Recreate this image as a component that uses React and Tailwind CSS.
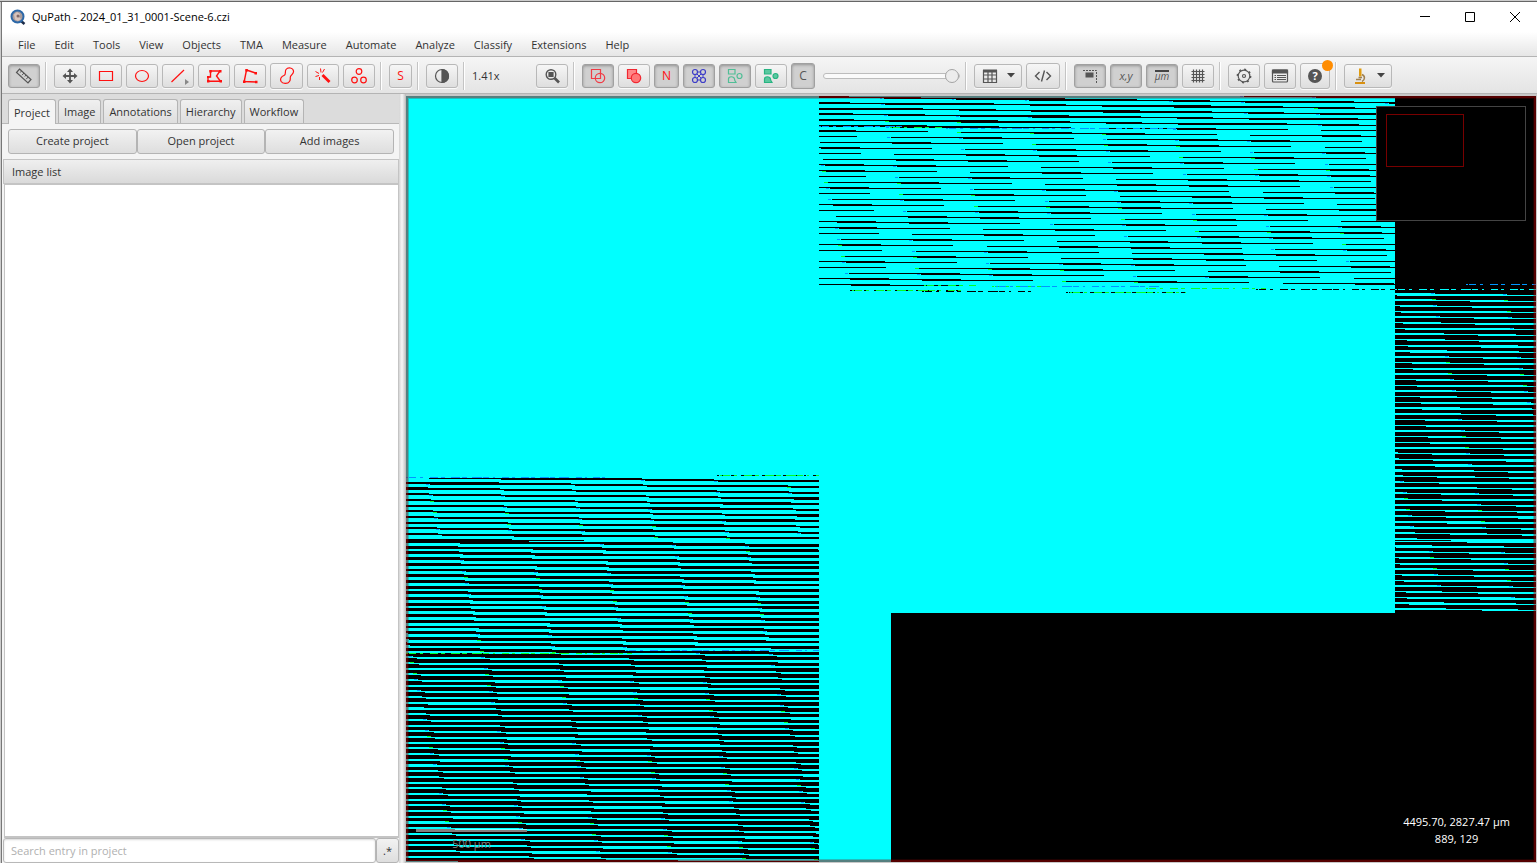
import React from 'react';

const CYAN = '#00ffff';

const menus = ['File', 'Edit', 'Tools', 'View', 'Objects', 'TMA', 'Measure', 'Automate', 'Analyze', 'Classify', 'Extensions', 'Help'];
const tabs = ['Project', 'Image', 'Annotations', 'Hierarchy', 'Workflow'];
const projectActions = ['Create project', 'Open project', 'Add images'];

// Tiles are 576 px wide, every source row is shifted by an eighth of a tile.
const TILE = 576;
const SHIFT = 72.157;
const SCALE = 1.4035;

// Each zone is a band of one tile: runs of `color` with length `run`,
// the run of source row 0 (screen row `row`) ends at x = `end`.
const zones = [
    { x0: 413, x1: 989, y0: 0, y1: 32, row: 6, end: 444, q: 0.8, run: 181, color: '#000' },
    { x0: 413, x1: 989, y0: 32, y1: 190, row: 34, end: 450, q: 0.37, run: 111, color: '#000' },
    { x0: 0, x1: 413, y0: 382, y1: 445, row: 382, end: 236, q: 0.48, run: 213, color: '#000' },
    { x0: 0, x1: 413, y0: 445, y1: 557, row: 447, end: 339, q: 0.78, run: 285, color: '#000' },
    { x0: 0, x1: 413, y0: 557, y1: 767, row: 560, end: 7, q: 0.5, run: 212, color: CYAN },
    { x0: 989, x1: 1131, y0: 195, y1: 445, row: 203, end: 1030, q: 0.52, run: 182, color: CYAN },
    { x0: 989, x1: 1131, y0: 445, y1: 515, row: 455, end: 1027, q: 0.52, run: 180, color: CYAN },
];

function zoneRuns(zone) {
    const runs = [];
    const marks = [];
    for (let y = zone.y0; y < zone.y1; y++) {
        const src = Math.floor((y - zone.row) * SCALE + zone.q);
        let end = Math.round(zone.end + src * SHIFT) % TILE;
        while (end > 0) end -= TILE;
        for (; end - zone.run < zone.x1; end += TILE) {
            const a = Math.max(zone.x0, end - zone.run);
            const b = Math.min(zone.x1, end);
            if (b > a) {
                runs.push(`M${a} ${y}h${b - a}v1h${a - b}z`);
            }
            const edge = zone.color === CYAN ? end : end - zone.run;
            const hash = (y * 7 + src * 13) % 5;
            if (hash < 3 && edge - 4 > zone.x0 && edge < zone.x1) {
                marks.push({ x: edge - 4, y, w: 3 + (hash % 2), green: hash === 1 });
            }
        }
    }
    return { d: runs.join(''), marks };
}

// Broken rows along the tile seams
const seams = [
    { x0: 413, x1: 500, y: 30, c: '#0096ff' },
    { x0: 484, x1: 536, y: 31, c: '#00ff28' },
    { x0: 540, x1: 770, y: 32, c: '#0096ff' },
    { x0: 444, x1: 555, y: 194, c: '#000' },
    { x0: 446, x1: 558, y: 194, c: '#00ff28' },
    { x0: 518, x1: 570, y: 189, c: '#00ff28' },
    { x0: 516, x1: 630, y: 195, c: '#000' },
    { x0: 586, x1: 640, y: 190, c: '#00ff28' },
    { x0: 590, x1: 760, y: 190, c: '#0096ff' },
    { x0: 660, x1: 780, y: 196, c: '#000' },
    { x0: 664, x1: 780, y: 196, c: '#00ff28' },
    { x0: 740, x1: 860, y: 192, c: '#00ff28' },
    { x0: 850, x1: 989, y: 193, c: '#000' },
    { x0: 0, x1: 200, y: 381, c: '#0096ff' },
    { x0: 311, x1: 413, y: 379, c: '#000' },
    { x0: 314, x1: 413, y: 379, c: '#00ff28' },
    { x0: 0, x1: 226, y: 557, c: '#00ff28' },
    { x0: 220, x1: 413, y: 554, c: '#0096ff' },
    { x0: 1060, x1: 1131, y: 188, c: '#0096ff' },
    { x0: 989, x1: 1131, y: 193, c: CYAN },
];

function seamPath({ x0, x1, y }) {
    let d = '';
    let i = 0;
    for (let x = x0; x < x1; i++) {
        const w = Math.min(2 + ((i * 5) % 9), x1 - x);
        d += `M${x} ${y}h${w}v1h-${w}z`;
        x += w + 1 + ((i * 3) % 7);
    }
    return d;
}

function SlideImage() {
    return (
        <svg width="1131" height="767" shapeRendering="crispEdges" className="block" role="img" aria-label="Slide image">
            <rect width="1131" height="767" fill={CYAN} />
            <rect x="485" y="517" width="646" height="250" fill="#000" />
            <rect x="989" width="142" height="517" fill="#000" />
            <rect y="557" width="413" height="210" fill="#000" />
            {zones.map((zone, i) => {
                const { d, marks } = zoneRuns(zone);
                return (
                    <g key={i}>
                        <path d={d} fill={zone.color} />
                        {marks.map((m, k) => (
                            <rect key={k} x={m.x} y={m.y} width={m.w} height="1" fill={m.green ? '#00ff28' : '#0096ff'} />
                        ))}
                    </g>
                );
            })}
            {seams.map((s, i) => <path key={i} d={seamPath(s)} fill={s.c} />)}
        </svg>
    );
}

function Icon({ children, color = '#555555', w = 18 }) {
    return (
        <svg width={w} height="18" viewBox={`0 0 ${w} 18`} fill="none" stroke={color} strokeWidth="1.2" aria-hidden="true">
            {children}
        </svg>
    );
}

function ToolButton({ label, active, size = 'w-8 h-6', className = '', children }) {
    const look = active
        ? 'bg-[#d0d0d0] border-[#a0a0a0] shadow-[inset_0_1px_3px_rgba(0,0,0,0.3)]'
        : 'bg-linear-to-b from-[#f6f6f6] to-[#dedede] border-[#b8b8b8] shadow-[0_1px_0_#fafafa]';
    return (
        <button
            type="button"
            aria-label={label}
            aria-pressed={!!active}
            className={`relative shrink-0 flex items-center justify-center rounded-[3px] border ${look} ${size} ${className}`}
        >
            {children}
        </button>
    );
}

function Separator() {
    return <div className="shrink-0 w-1.5 h-7 pl-px"><div className="h-full w-0.5 border-l border-[#c4c4c4] bg-white" /></div>;
}

function Caret() {
    return <svg width="8" height="5" viewBox="0 0 8 5" aria-hidden="true"><path d="M0 0h8L4 4.5z" fill="#444" /></svg>;
}

function DrawingTools() {
    const red = '#ff1010';
    return (
        <>
            <ToolButton label="Move">
                <Icon>
                    <path d="M9 3v12M3 9h12" strokeWidth="1.8" />
                    <path d="M9 1.5 12 5H6zM9 16.500 6 13h6zM1.500 9 5 6v6zM16.500 9 13 12V6z" fill="#555" stroke="none" />
                </Icon>
            </ToolButton>
            <ToolButton label="Rectangle"><Icon color={red}><path d="M2.500 4.500h13v9h-13z" /></Icon></ToolButton>
            <ToolButton label="Ellipse"><Icon color={red}><ellipse cx="9" cy="9" rx="6.500" ry="5.500" /></Icon></ToolButton>
            <ToolButton label="Line">
                <Icon color={red}><path d="M2.500 15 15 3" /></Icon>
                <svg className="absolute right-1 bottom-0.5" width="4" height="6" viewBox="0 0 4 6" aria-hidden="true"><path d="M0 0 4 3 0 6z" fill="#888" /></svg>
            </ToolButton>
            <ToolButton label="Polygon">
                <Icon color={red}>
                    <path d="M5.500 4H15l-3.500 5 4 5.200H3V10h2.500z" strokeWidth="1.400" />
                    <path d="M4.300 3h2.500v2.500H4.300zM14 3h2.500v2.500H14zM14.500 13H17v2.500h-2.500zM2 13h2.500v2.500H2zM2 9h2.500v2H2z" fill={red} stroke="none" />
                </Icon>
            </ToolButton>
            <ToolButton label="Polyline">
                <Icon color={red}>
                    <path d="M14.500 6 5.500 3 3.200 14.500 15 15" strokeWidth="1.400" />
                    <path d="M13.500 5H16v2.500h-2.500zM4.300 2h2.500v2.500H4.300zM2 13.500h2.500V16H2zM14 13.700h2.500v2.500H14z" fill={red} stroke="none" />
                </Icon>
            </ToolButton>
            <ToolButton label="Brush" size="w-[33px] h-[26px]">
                <Icon color={red}>
                    <path d="M8 2.500c2-2.500 7-2 7.500 1.500.400 2.500-2 3.500-3 5.500-.700 1.500.500 3-1 5-1.800 2.800-7 2.500-8.500-.300-1.200-2.700.500-4.700 3-5.700C8.500 7.500 6.500 5 8 2.500z" />
                </Icon>
            </ToolButton>
            <ToolButton label="Wand">
                <Icon color={red}>
                    <path d="M8.500 8 15.500 15" strokeWidth="2.800" />
                    <path d="M6.500 1.500l.5 4M10.500 2l-2 3.500M1.500 4.500 5 6.500M1.500 9.500 5 8.500M5.500 10v3" strokeWidth="1" />
                </Icon>
            </ToolButton>
            <ToolButton label="Points">
                <Icon color={red}><circle cx="9" cy="4.500" r="2.800" /><circle cx="4.500" cy="13" r="2.800" /><circle cx="13.500" cy="13" r="2.800" /></Icon>
            </ToolButton>
        </>
    );
}

function OverlayTools() {
    return (
        <>
            <ToolButton label="Show annotations" active>
                <Icon color="#f03c46"><path d="M2.500 2.500h9v9h-9z" /><circle cx="11" cy="11" r="4.700" /></Icon>
            </ToolButton>
            <ToolButton label="Fill annotations">
                <Icon color="#f02832"><path d="M2.500 2.500h9v9h-9z" fill="#f88" /><circle cx="11" cy="11" r="4.700" fill="#f77" /></Icon>
            </ToolButton>
            <ToolButton label="Show names" active size="w-[25px] h-6"><span className="text-[12px] text-[#ff1010]">N</span></ToolButton>
            <ToolButton label="Show TMA grid" active>
                <Icon color="#3c3cc8">
                    <circle cx="5" cy="5" r="2.500" /><circle cx="13" cy="5" r="2.500" /><circle cx="5" cy="13" r="2.500" /><circle cx="13" cy="13" r="2.500" />
                    <path d="M7 7l4 4M11 7l-4 4M7.500 5h3M7.500 13h3M5 7.500v3M13 7.500v3" strokeWidth="1" />
                </Icon>
            </ToolButton>
            <ToolButton label="Show detections" active>
                <Icon color="#50be96"><path d="M2.500 2.500h6.500v4.500H2.500zM2.500 15.500V12c0-3 5.500-3 6 0 0 1.500.500 2 1.500 3.500z" /><circle cx="13.500" cy="9" r="2.500" /></Icon>
            </ToolButton>
            <ToolButton label="Fill detections">
                <Icon color="#28b482"><path d="M2.500 2.500h6.500v4.500H2.500zM2.500 15.500V12c0-3 5.500-3 6 0 0 1.500.500 2 1.500 3.500z" fill="#5ac8a0" /><circle cx="13.500" cy="9" r="2.500" fill="#5ac8a0" /></Icon>
            </ToolButton>
            <ToolButton label="Show pixel classification" active size="w-6 h-[26px]"><span className="text-[12px] text-[#555]">C</span></ToolButton>
        </>
    );
}

function Toolbar() {
    return (
        <div role="toolbar" aria-label="Main toolbar" className="h-[37px] flex items-center gap-1 pt-0.5 pl-1.5 bg-linear-to-b from-[#f5f5f5] to-[#e4e4e4] border-b border-[#b4b4b4]">
            <ToolButton label="Show analysis pane" active>
                <Icon>
                    <path d="M4.500 2 16 12.500 13 16 1.500 5.500z" />
                    <path d="m6.500 4-1.200 1.500M9 6 7 8.200M11 8l-1.200 1.500M13.200 10l-2 2.200" strokeWidth="1" />
                </Icon>
            </ToolButton>
            <Separator />
            <DrawingTools />
            <Separator />
            <ToolButton label="Selection mode" size="w-[23px] h-6"><span className="text-[12px] text-[#ff1010]">S</span></ToolButton>
            <Separator />
            <ToolButton label="Brightness and contrast">
                <Icon><circle cx="9" cy="9" r="6.500" /><path d="M9 2.500a6.500 6.500 0 0 1 0 13z" fill="#555" /></Icon>
            </ToolButton>
            <Separator />
            <span className="shrink-0 w-[60px]">1.41x</span>
            <ToolButton label="Zoom to fit">
                <Icon><circle cx="8" cy="7.500" r="4.800" strokeWidth="1.400" /><path d="M6 5.500h4v4H6z" fill="#555" /><path d="m11.500 11 4.500 4.500" strokeWidth="2.600" /></Icon>
            </ToolButton>
            <Separator />
            <OverlayTools />
            <input
                type="range"
                aria-label="Overlay opacity"
                defaultValue="100"
                className="shrink-0 ml-1 w-[137px] h-4 appearance-none bg-transparent [&::-webkit-slider-runnable-track]:h-1.5 [&::-webkit-slider-runnable-track]:rounded-full [&::-webkit-slider-runnable-track]:border [&::-webkit-slider-runnable-track]:border-[#bcbcbc] [&::-webkit-slider-runnable-track]:bg-[#fafafa] [&::-webkit-slider-thumb]:appearance-none [&::-webkit-slider-thumb]:size-3.5 [&::-webkit-slider-thumb]:-mt-[5px] [&::-webkit-slider-thumb]:rounded-full [&::-webkit-slider-thumb]:border [&::-webkit-slider-thumb]:border-[#a4a4a4] [&::-webkit-slider-thumb]:bg-[#ececec]"
            />
            <Separator />
            <ToolButton label="Measurement tables" size="w-12 h-6" className="gap-2">
                <Icon><path d="M2.500 3.500h13v12h-13zM2.500 8h13M2.500 12h13M7 4v11M11 4v11" /><path d="M2 2.500h14v3H2z" fill="#555" stroke="none" /></Icon>
                <Caret />
            </ToolButton>
            <ToolButton label="Script editor" size="w-[34px] h-[26px]">
                <Icon><path d="M5.500 5 1.500 9l4 4M12.500 5l4 4-4 4M10.500 3.500l-3 11" strokeWidth="1.400" /></Icon>
            </ToolButton>
            <Separator />
            <ToolButton label="Show overview" active>
                <Icon><path d="M2 3.500h13.500V16" strokeDasharray="2 1" strokeWidth="1" /><path d="M4.500 5.500h8v5h-8z" fill="#555" stroke="none" /></Icon>
            </ToolButton>
            <ToolButton label="Show location" active><span className="italic text-[#555]">x,y</span></ToolButton>
            <ToolButton label="Show scalebar" active>
                <span className="w-3.5 flex justify-center border-t-2 border-[#444] italic text-[#555] text-[10px] leading-[9px]">μm</span>
            </ToolButton>
            <ToolButton label="Show grid">
                <Icon><path d="M4.500 2.500v13M7.500 2.500v13M10.500 2.500v13M13.500 2.500v13M2.500 4.500h13M2.500 7.500h13M2.500 10.500h13M2.500 13.500h13" /></Icon>
            </ToolButton>
            <Separator />
            <ToolButton label="Preferences">
                <Icon><circle cx="9" cy="9" r="5.800" /><circle cx="9" cy="9" r="6.700" strokeDasharray="2 3.260" strokeWidth="1.400" /><circle cx="9" cy="9" r="1.500" /></Icon>
            </ToolButton>
            <ToolButton label="Log" size="w-8 h-[26px]">
                <Icon><rect x="1.500" y="3" width="15" height="12" rx="1" /><path d="M1.500 3h15v3h-15z" fill="#555" /><path d="M6 8.500h9M6 10.500h9M6 12.500h9M3.500 8.500H5M3.500 10.500H5M3.500 12.500H5" strokeWidth="1" /></Icon>
            </ToolButton>
            <ToolButton label="Help" size="w-[30px] h-[26px]">
                <span className="size-3.5 rounded-full bg-[#555] text-white leading-[14px] font-bold text-center">?</span>
                <span className="absolute -top-1 -right-1 size-[11px] rounded-full bg-[#ff8c00]" />
            </ToolButton>
            <Separator />
            <ToolButton label="Microscope" size="w-12 h-6" className="gap-2">
                <Icon color="#a08050">
                    <path d="M8 1.500h2.500v8H8z" fill="#e09c10" stroke="none" />
                    <path d="M7.500 10.500h3.500M11 7.500c3.500 1.500 3 5.500 0 7M5 12.500h5" strokeWidth="1.500" />
                    <path d="M4 16h10" stroke="#d89010" strokeWidth="2" />
                </Icon>
                <Caret />
            </ToolButton>
        </div>
    );
}

function TitleBar() {
    return (
        <header className="h-[30px] flex items-center bg-white text-black">
            <svg className="ml-2 mr-1.5 shrink-0" width="16" height="16" viewBox="0 0 16 16" aria-hidden="true">
                <path d="m11 12 3.500 3" stroke="#1c2c48" strokeWidth="2.500" />
                <circle cx="7.500" cy="7.500" r="6" fill="#a89c9c" stroke="#2c68a8" strokeWidth="2" />
                <path d="M4 5.500 7 3l3 2-1 3 2 2-3 2-3-1.500z" fill="#d8c4bc" />
                <circle cx="8" cy="7" r="1.500" fill="#806868" />
            </svg>
            <h1 className="grow">QuPath - 2024_01_31_0001-Scene-6.czi</h1>
            <button type="button" aria-label="Minimize" className="w-[45px] h-full flex items-center justify-center"><svg width="10" height="10"><path d="M0 4.500h10" stroke="#000" /></svg></button>
            <button type="button" aria-label="Maximize" className="w-[45px] h-full flex items-center justify-center"><svg width="10" height="10"><path d="M.5.5h9v9h-9z" fill="none" stroke="#000" /></svg></button>
            <button type="button" aria-label="Close" className="w-[45px] h-full flex items-center justify-center"><svg width="10" height="10"><path d="m0 0 10 10M10 0 0 10" stroke="#000" /></svg></button>
        </header>
    );
}

function ProjectPane() {
    return (
        <aside className="w-[397px] shrink-0 flex flex-col bg-[#f4f4f4]">
            <div role="tablist" className="h-[30px] shrink-0 flex items-end gap-0.5 pl-1.5 bg-[#dcdcdc] border-b border-[#b8b8b8]">
                {tabs.map((tab, i) => (
                    <button
                        key={tab}
                        type="button"
                        role="tab"
                        aria-selected={i === 0}
                        className={`pt-0.5 px-[5px] border border-b-0 border-[#b4b4b4] rounded-t-[3px] ${i === 0 ? 'bg-[#f4f4f4] -mb-px h-[25px]' : 'h-6 bg-linear-to-b from-[#f0f0f0] to-[#dedede]'}`}
                    >
                        {tab}
                    </button>
                ))}
            </div>
            <div className="shrink-0 grid grid-cols-3 pl-1.5 pt-[5px] pb-[5px] pr-[5px]">
                {projectActions.map((action) => (
                    <button key={action} type="button" className="h-[25px] rounded-[3px] border border-[#b4b4b4] bg-linear-to-b from-[#f2f2f2] to-[#dedede]">
                        {action}
                    </button>
                ))}
            </div>
            <h2 className="shrink-0 h-[25px] ml-px px-2 leading-6 border border-[#c4c4c4] bg-linear-to-b from-[#efefef] to-[#dadada]">Image list</h2>
            <div className="grow ml-0.5 bg-white border border-[#c4c4c4] border-b-2" />
            <div className="shrink-0 flex h-[25px] pl-px">
                <input
                    type="text"
                    aria-label="Search entry in project"
                    placeholder="Search entry in project"
                    className="grow min-w-0 px-[7px] bg-white border border-[#b8b8b8] rounded-[3px] shadow-[inset_0_1px_2px_rgba(0,0,0,0.15)] placeholder:text-[#b0b0b0]"
                />
                <button type="button" aria-label="Use regular expression" className="w-[23px] border border-[#b4b4b4] rounded-[3px] bg-linear-to-b from-[#f2f2f2] to-[#dedede]">.*</button>
            </div>
        </aside>
    );
}

function Viewer() {
    return (
        <main className="relative grow min-w-0 overflow-hidden bg-black mr-px mt-[2px] mb-px">
            <SlideImage />
            <div className="absolute inset-0 border-2 border-[rgba(170,0,0,0.5)] shadow-[inset_0_0_0_1px_rgba(120,0,0,0.25)]" />
            {/* overview */}
            <div className="absolute top-[10px] right-[10px] w-[150px] h-[115px] bg-black border border-[#444]">
                <div className="ml-[9px] mt-[7px] w-[78px] h-[53px] border border-[#780000]" />
            </div>
            {/* scalebar */}
            <div className="absolute left-[10px] bottom-2 w-[111px] flex flex-col items-center text-[#808080]">
                <div className="w-full h-[3px] bg-white/50" />
                <span className="mt-0.5 leading-5">500 µm</span>
            </div>
            <p className="absolute right-[26px] bottom-[15px] text-center text-white leading-[17px]">
                4495.70, 2827.47 µm<br />889, 129
            </p>
        </main>
    );
}

export default function App() {
    return (
        <div className="h-screen flex flex-col overflow-hidden bg-[#cccccc] font-['Open_Sans','Noto_Sans',sans-serif] text-[11px] leading-4 text-[#333333]">
            <div className="h-0.5 shrink-0 border-b border-[#666]" />
            <div className="grow min-h-0 flex flex-col border-l border-[#777] ml-px">
                <TitleBar />
                <nav aria-label="Main menu" className="h-[25px] shrink-0 flex items-center gap-px pt-0.5 pl-[7px] bg-linear-to-b from-white to-[#e6e6e6] border-b border-[#b4b4b4]">
                    {menus.map((menu) => (
                        <button key={menu} type="button" className="px-[9px]">{menu}</button>
                    ))}
                </nav>
                <Toolbar />
                <div className="grow min-h-0 flex bg-[#c8c8c8]">
                    <ProjectPane />
                    <div className="shrink-0 w-[7px] border-r border-[#c0c0c0] bg-linear-to-r from-[#d4d4d4] via-[#f6f6f6] to-[#cccccc]" />
                    <Viewer />
                </div>
            </div>
        </div>
    );
}
